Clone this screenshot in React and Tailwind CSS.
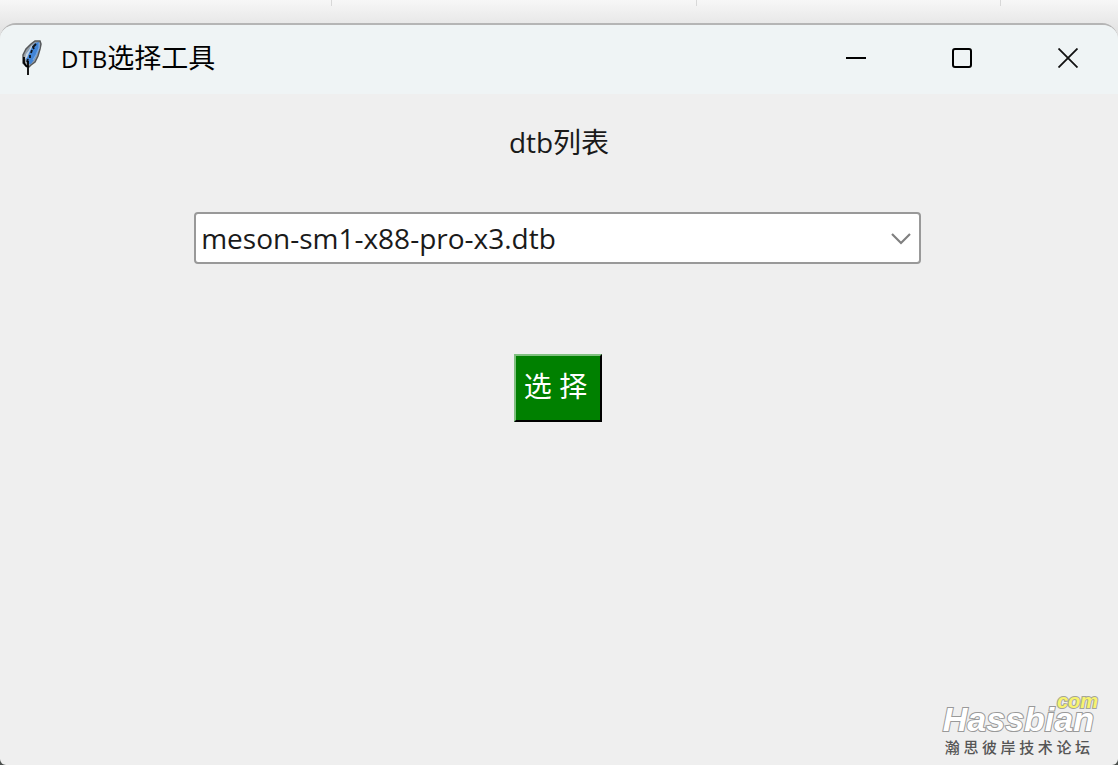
import { useState } from "react";

const files = ["meson-sm1-x88-pro-x3.dtb"];

function Feather() {
  return (
    <svg width="20" height="36" viewBox="0 0 20 36" aria-hidden="true">
      <path d="M18 1 L19 4 L18 9 L16 16 L13 22 L9 25 L7 27 L4 26 L1 23 L1 15 L4 9 L9 4 L13 1 Z" fill="#9aa0a5" stroke="#55585b" strokeWidth="1.5" />
      <path d="M17 2 L17 8 L15 14 L12 20 L9 24 L6 24 L4 20 L4 14 L8 8 L13 3 Z" fill="#4385d6" />
      <path d="M3 19 L4 14 L7 10 L9 6 L11 5 L9 9 L7 13 L5 18 Z" fill="#c3d2e2" />
      <path d="M14 4 L11 7 L12 9 M10 10 L9 13 M8 15 L8 18 M6 19 L5 22" fill="none" stroke="#101418" strokeWidth="1.8" />
      <path d="M17 3 L17 8 L14 15 L11 20" fill="none" stroke="#75a8e6" strokeWidth="1.2" />
      <path d="M6 21 L6 35 M2 17 L2 23 L5 27" fill="none" stroke="#000" strokeWidth="1.8" />
    </svg>
  );
}

function TitleBar() {
  return (
    <header className="flex h-[69px] items-center justify-between bg-[#eff4f5] pb-1">
      <div className="flex items-center pl-[22px]">
        <Feather />
        <h1 className="ml-[19px] text-[27px] leading-9 text-black">
          <span className="text-2xl">DTB</span>选择工具
        </h1>
      </div>
      <div className="flex h-full gap-[26px] pr-[10px]">
        <button aria-label="最小化" className="flex w-20 items-center justify-center">
          <svg width="20" height="20" viewBox="0 0 20 20">
            <path d="M0 10H20" stroke="#000" strokeWidth="2" />
          </svg>
        </button>
        <button aria-label="最大化" className="flex w-20 items-center justify-center">
          <svg width="20" height="20" viewBox="0 0 20 20">
            <rect x="1" y="1" width="18" height="18" rx="2" fill="none" stroke="#000" strokeWidth="2" />
          </svg>
        </button>
        <button aria-label="关闭" className="flex w-20 items-center justify-center">
          <svg width="20" height="20" viewBox="0 0 20 20">
            <path d="M0.5 0.5L19.5 19.5M19.5 0.5L0.5 19.5" stroke="#111" strokeWidth="1.8" />
          </svg>
        </button>
      </div>
    </header>
  );
}

function Watermark() {
  return (
    <div className="absolute right-5 bottom-[6px] flex flex-col items-end">
      <span className="font-['Liberation_Sans',sans-serif] text-xl leading-3 font-bold text-[#f7f36e] italic [-webkit-text-stroke:2px_#a5a59a] [paint-order:stroke]">
        com
      </span>
      <div className="mr-1">
        <div className="font-['Liberation_Sans',sans-serif] text-[34px] leading-6 font-bold text-white italic [-webkit-text-stroke:2px_#999] [paint-order:stroke]">
          Hassbian
        </div>
        <div className="mt-1 flex justify-between pr-1 pl-[2px] text-[15px] leading-6 font-medium text-[#555]">
          {[..."瀚思彼岸技术论坛"].map((char) => (
            <span key={char}>{char}</span>
          ))}
        </div>
      </div>
    </div>
  );
}

export default function App() {
  const [file, setFile] = useState(files[0]);

  return (
    <div className="flex min-h-screen flex-col bg-[#4a4f4c] font-['Open_Sans','Noto_Sans_CJK_SC',sans-serif]">
      <div className="-mb-4 flex h-[39px] items-start bg-linear-to-b from-[#f7f7f7] to-[#dedede] pr-[117px]">
        <div className="h-[6px] w-[332px] border-r border-[#d8d8d8]"></div>
        <div className="h-[6px] flex-[365] border-r border-[#d8d8d8]"></div>
        <div className="h-[6px] flex-[304] border-r border-[#d8d8d8]"></div>
      </div>
      <div className="relative flex flex-1 flex-col overflow-hidden rounded-t-2xl rounded-b-md border-t-2 border-[#b5b5b5] bg-[#efefef]">
        <TitleBar />
        <main className="flex flex-1 flex-col items-center">
          <label htmlFor="dtb" className="mt-7 text-[28px] leading-10 text-[#1a1a1a]">
            dtb列表
          </label>
          <div className="relative mt-[50px] mr-[3px] w-[65%]">
            <select
              id="dtb"
              value={file}
              onChange={(e) => setFile(e.target.value)}
              className="h-[52px] w-full appearance-none rounded-sm border-2 border-[#999] bg-white px-[5px] text-[28px] text-[#1a1a1a]"
            >
              {files.map((name) => (
                <option key={name}>{name}</option>
              ))}
            </select>
            <svg className="pointer-events-none absolute top-5 right-2.5" width="20" height="13" viewBox="0 0 20 13">
              <path d="M1 2L10 11L19 2" fill="none" stroke="#808080" strokeWidth="2.2" />
            </svg>
          </div>
          <button className="mt-[90px] mr-[3px] h-[68px] w-[88px] border-2 border-t-[#80c080] border-r-black border-b-black border-l-[#80c080] bg-[#008000] pr-1 pb-1 text-[28px] text-white">
            选 择
          </button>
        </main>
        <Watermark />
      </div>
    </div>
  );
}
